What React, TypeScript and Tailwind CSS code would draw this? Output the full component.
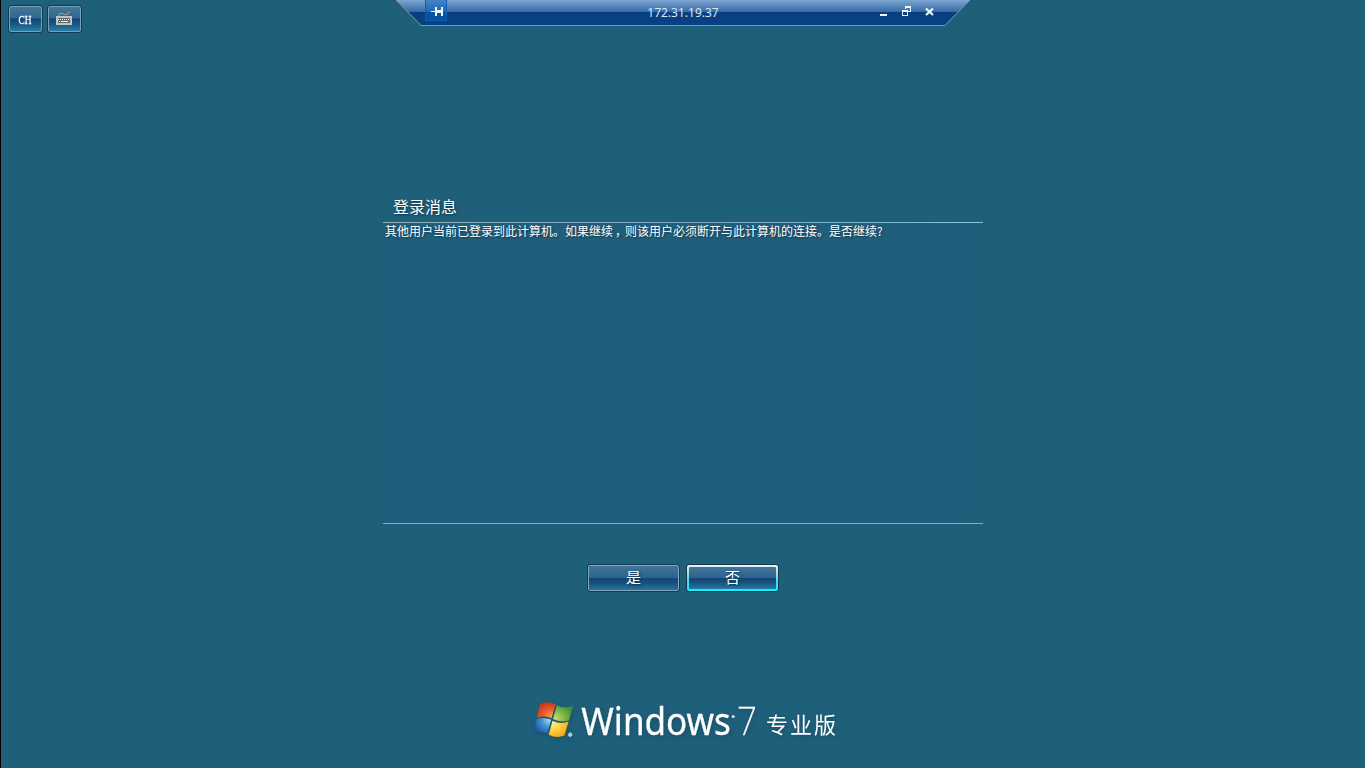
import React from 'react';

function KeyboardIcon() {
  return (
    <svg width="18" height="17" viewBox="0 0 18 17" className="-ml-px" shapeRendering="crispEdges">
      <path d="M4 5V3.5l1-1h3l1 1h3l2-2.5h1" fill="none" stroke="#9d9992" strokeWidth="1.2" shapeRendering="auto" />
      <rect x="1" y="5" width="16" height="9" fill="#c3c3c3" />
      <rect x="3" y="7" width="12" height="5" fill="#5c6870" />
      <path d="M3 8.5h12M4 10.5h2M12 10.5h2" stroke="#f4f4f4" strokeDasharray="1 1" />
      <path d="M6 10.5h6" stroke="#f4f4f4" />
    </svg>
  );
}

function ToolButton({ children, label }: { children: React.ReactNode; label: string }) {
  return (
    <button
      aria-label={label}
      className="flex h-[28px] w-[35px] items-center justify-center rounded-[3px] border border-[#123b51] bg-[linear-gradient(#46799a_0%,#2f6791_45%,#134477_50%,#1c5983_72%,#2b86a9_100%)] text-white shadow-[inset_0_0_0_1px_#78a1b8]"
    >
      {children}
    </button>
  );
}

function ConnectionBar() {
  return (
    <div className="grid h-[26px] w-[574px]">
      <svg className="col-start-1 row-start-1" width="574" height="26" viewBox="0 0 574 26">
        <defs>
          <linearGradient id="bar" x2="0" y2="1">
            <stop offset="0" stopColor="#7da5d0" />
            <stop offset=".47" stopColor="#366ba6" />
            <stop offset=".47" stopColor="#083f80" />
            <stop offset="1" stopColor="#084284" />
          </linearGradient>
        </defs>
        <path d="M0 0H574L549 25H25Z" fill="url(#bar)" />
        <path d="M0 0L25 25.5H549L574 0" fill="none" stroke="#8d93a0" />
      </svg>
      <div className="col-start-1 row-start-1 flex pr-[30px] pl-[29px]">
        <div className="flex h-[21px] w-[22px] border border-t-0 border-[#0b62b5] bg-[#0764b8]/50 pt-[6px] pl-[5px]">
          <svg width="13" height="12" viewBox="0 0 13 12" shapeRendering="crispEdges">
            <path d="M0 5h4V1h2v3h4V1h2v9h-2V7H6v3H4V6H0z" fill="#eef4fb" />
          </svg>
        </div>
        <div className="flex-1 pt-[5px] pl-[41px] text-center font-['Noto_Sans',sans-serif] text-[12px] leading-[16px] text-[#dce7f2]">
          172.31.19.37
        </div>
        <div className="flex w-[62px] gap-[15px] pt-[6px] pl-[2px]">
          <svg width="7" height="12" viewBox="0 0 7 12">
            <path d="M0 8h7v2H0z" fill="#eef4fb" />
          </svg>
          <svg width="11" height="12" viewBox="0 0 11 12" shapeRendering="crispEdges">
            <path d="M3 0h6v6H6V5h2V2H4v1H3z" fill="#eef4fb" />
            <path d="M0 4h6v6H0zM1 6v3h4V6z" fill="#eef4fb" fillRule="evenodd" />
          </svg>
          <svg width="9" height="12" viewBox="0 0 9 12" className="-ml-[3px]">
            <path d="M1 2.5L8 9M8 2.5L1 9" stroke="#eef4fb" strokeWidth="2.3" />
          </svg>
        </div>
      </div>
    </div>
  );
}

function WindowsFlag() {
  return (
    <svg width="42" height="40" viewBox="0 0 42 40" className="overflow-visible">
      <defs>
        <radialGradient id="red" cx=".8" cy=".9" r=".9">
          <stop stopColor="#f8a13c" />
          <stop offset=".55" stopColor="#e6582b" />
          <stop offset="1" stopColor="#c83820" />
        </radialGradient>
        <radialGradient id="green" cx=".1" cy=".8" r="1">
          <stop stopColor="#c4dc7b" />
          <stop offset=".5" stopColor="#7db541" />
          <stop offset="1" stopColor="#3b8b38" />
        </radialGradient>
        <radialGradient id="blue" cx=".9" cy=".1" r="1">
          <stop stopColor="#a5dcf4" />
          <stop offset=".5" stopColor="#3f8fd2" />
          <stop offset="1" stopColor="#2158a4" />
        </radialGradient>
        <radialGradient id="yellow" cx=".1" cy=".1" r="1">
          <stop stopColor="#fff0a2" />
          <stop offset=".5" stopColor="#ffd23f" />
          <stop offset="1" stopColor="#f4a31b" />
        </radialGradient>
      </defs>
      <path d="M5.2 4.2Q12 .2 20.5 4.3L16.6 18.3Q9 14.8 1.4 18Z" fill="url(#red)" />
      <path d="M21.8 5.2Q29.5 9.3 38.2 5.8L34 20.2Q26 23.3 17.9 19.1Z" fill="url(#green)" />
      <path d="M1 19.4Q8.5 16.3 16.2 19.8L12.2 33.8Q4.8 30.3-.7 33Z" fill="url(#blue)" />
      <path d="M17.5 20.7Q25.8 24.7 33.6 21.5L29.5 35.5Q21.8 38.8 13.6 34.8Z" fill="url(#yellow)" />
      <circle cx="35.2" cy="34.7" r="1.7" fill="#a9bdc8" stroke="#eff6fa" strokeWidth=".7" />
    </svg>
  );
}

function Wordmark() {
  return (
    <div className="flex items-start [filter:drop-shadow(1px_2px_2px_#123c5266)]">
      <WindowsFlag />
      <svg width="264" height="46" viewBox="0 0 264 46" className="ml-[3px] overflow-visible" fill="#fff">
        <text x="1.4" y="35" fontSize="38" transform="scale(.922 1)" stroke="#fff" strokeWidth=".3" fontFamily="Noto Sans, sans-serif">Windows</text>
        <circle cx="153.2" cy="16.5" r="1.6" fill="#cfdee6" />
        <text x="171" y="35" fontSize="38" fontWeight="200" stroke="#fff" strokeWidth=".3" transform="scale(.918 1)" fontFamily="Noto Sans, Inter, sans-serif">7</text>
        <text x="186" y="33" fontSize="22" textLength="70" fontFamily="Noto Sans CJK SC, sans-serif">专业版</text>
      </svg>
    </div>
  );
}

export default function App() {
  return (
    <main className="flex h-[768px] w-[1365px] flex-col overflow-hidden border-l border-black bg-[#1e5f7a] font-['Noto_Sans_CJK_SC',sans-serif] text-white">
      <header className="flex h-[33px]">
        <div className="flex w-[395px] gap-[4px] pt-[5px] pl-[7px]">
          <ToolButton label="输入法">
            <span className="-ml-px inline-block scale-x-[.72] font-['Liberation_Serif',serif] text-[13px] leading-none [-webkit-text-stroke:0.3px_white]">CH</span>
          </ToolButton>
          <ToolButton label="键盘">
            <KeyboardIcon />
          </ToolButton>
        </div>
        <ConnectionBar />
      </header>

      <section className="mt-[163px] ml-[382px] w-[600px]">
        <h1 className="h-[26px] pl-[10px] text-[16px] leading-[20px] [text-shadow:1px_1px_2px_#0b3447]">登录消息</h1>
        <div className="h-px bg-[linear-gradient(90deg,#94b0bd,#7aa7cb_55%,#82c5df)]" />
        <p className="h-[300px] bg-[linear-gradient(90deg,#205e7b_80%,#1f5f7a)] pl-[2px] text-[12px] leading-[16px] whitespace-nowrap [text-shadow:1px_1px_2px_#0b3447]">
          其他用户当前已登录到此计算机。如果继续<span className="inline-block translate-x-[2px]">，</span>则该用户必须断开与此计算机的连接。是否继续?
        </p>
        <div className="h-px bg-[#7fb1c3]" />
      </section>

      <div className="mt-[40px] ml-[586px] flex gap-[6px]">
        <button className="h-[28px] w-[93px] rounded-[3px] border border-[#143b51] bg-[linear-gradient(#437598_0%,#2b6391_48%,#134577_50%,#194e7e_68%,#247ba1_100%)] pb-[2px] text-[15px] leading-[20px] shadow-[inset_0_0_0_1px_#84a7ba] [text-shadow:1px_1px_2px_#0b2942]">
          是
        </button>
        <button className="h-[28px] w-[93px] rounded-[3px] border border-[#143b51] bg-[linear-gradient(#e9f1f6,#b9d9e5_30%,#39dff1_65%,#13f1ff)] p-[2px] text-[15px] leading-[19px] [text-shadow:1px_1px_2px_#0b2942]">
          <span className="block h-[22px] rounded-[1px] bg-[linear-gradient(#437598_0%,#2b6391_48%,#134577_50%,#194e7e_68%,#247ba1_100%)]">否</span>
        </button>
      </div>

      <footer className="mt-[108px] ml-[534px]">
        <Wordmark />
      </footer>
    </main>
  );
}
